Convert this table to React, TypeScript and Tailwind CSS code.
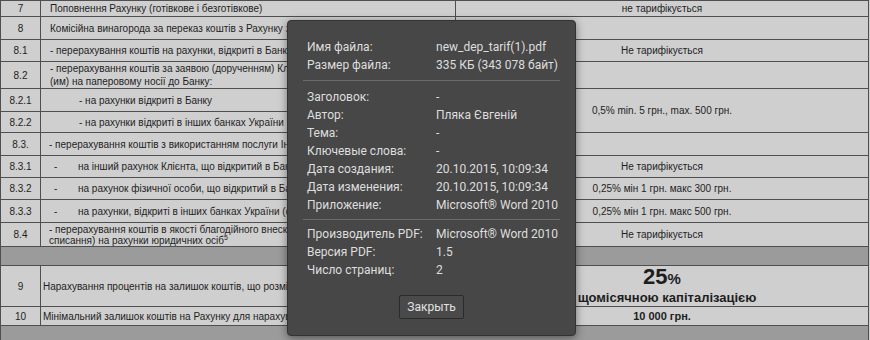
import React from "react";

type Row = {
  num: string;
  h: string;
  band?: boolean;
  desc?: React.ReactNode;
  fee?: React.ReactNode;
  feeSpan?: number;
  noFee?: boolean;
};

const cell = "border border-[#4f4f4f] p-0 align-middle";

// the dialog hides the rest of each description, so clip it right at its edge
function Clip({ children, pl }: { children: React.ReactNode; pl: string }) {
  return <div className={`w-[247px] overflow-hidden whitespace-nowrap ${pl}`}>{children}</div>;
}

function Dash({ text }: { text: string }) {
  return (
    <Clip pl="pl-[13px]">
      <span className="inline-block w-[24px]">-</span>
      {text}
    </Clip>
  );
}

const ROWS: Row[] = [
  { num: "7", h: "h-[14px]", desc: <div className="pl-[9px] whitespace-nowrap">Поповнення Рахунку (готівкове і безготівкове)</div>, fee: "не тарифікується" },
  { num: "8", h: "h-[23px]", desc: <Clip pl="pl-[9px]">Комісійна винагорода за переказ коштів з Рахунку з Рахунку</Clip> },
  { num: "8.1", h: "h-[22px]", desc: <Clip pl="pl-[9px]">- перерахування коштів на рахунки, відкриті в Банку</Clip>, fee: "Не тарифікується" },
  {
    num: "8.2",
    h: "h-[24px]",
    desc: (
      <Clip pl="pl-[9px] leading-[13px]">
        <div>- перерахування коштів за заявою (дорученням) Клієнта</div>
        <div>(им) на паперовому носії до Банку:</div>
      </Clip>
    ),
  },
  { num: "8.2.1", h: "h-[23px]", desc: <Clip pl="pl-[38px]">- на рахунки відкриті в Банку</Clip>, fee: "0,5% min. 5 грн., max. 500 грн.", feeSpan: 2 },
  { num: "8.2.2", h: "h-[21px]", desc: <Clip pl="pl-[38px]">- на рахунки відкриті в інших банках України</Clip>, noFee: true },
  { num: "8.3.", h: "h-[23px]", desc: <Clip pl="pl-[8px]">- перерахування коштів з використанням послуги Інтернет</Clip> },
  { num: "8.3.1", h: "h-[22px]", desc: <Dash text="на інший рахунок Клієнта, що відкритий в Банку" />, fee: "Не тарифікується" },
  { num: "8.3.2", h: "h-[22px]", desc: <Dash text="на рахунок фізичної особи, що відкритий в Банку" />, fee: "0,25% мін 1 грн. макс 300 грн." },
  { num: "8.3.3", h: "h-[23px]", desc: <Dash text="на рахунки, відкриті в інших банках України (фізичних" />, fee: "0,25% мін 1 грн. макс 500 грн." },
  {
    num: "8.4",
    h: "h-[24px]",
    desc: (
      <Clip pl="pl-[8px] leading-[11px]">
        <div>- перерахування коштів в якості благодійного внеску</div>
        <div>
          списання) на рахунки юридичних осіб<sup className="text-[7px]">5</sup>
        </div>
      </Clip>
    ),
    fee: "Не тарифікується",
  },
  { num: "", h: "h-[19px]", band: true },
  {
    num: "9",
    h: "h-[39px]",
    desc: <Clip pl="pl-[2px]">Нарахування процентів на залишок коштів, що розміщені</Clip>,
    fee: (
      <div className="font-bold leading-none">
        <div className="text-[22px] leading-[22px]">
          25<span className="text-[15px]">%</span>
        </div>
        <div className="text-[13px] leading-[16px] whitespace-nowrap">з щомісячною капіталізацією</div>
      </div>
    ),
  },
  { num: "10", h: "h-[19px]", desc: <Clip pl="pl-[2px]">Мінімальний залишок коштів на Рахунку для нарахування</Clip>, fee: <span className="font-bold text-[11px]">10 000 грн.</span> },
  { num: "", h: "h-[19px]", band: true },
  { num: "", h: "h-[10px]" },
];

const INFO_TOP = [
  ["Имя файла:", "new_dep_tarif(1).pdf"],
  ["Размер файла:", "335 КБ (343 078 байт)"],
];

const INFO_MID = [
  ["Заголовок:", "-"],
  ["Автор:", "Пляка Євгеній"],
  ["Тема:", "-"],
  ["Ключевые слова:", "-"],
  ["Дата создания:", "20.10.2015, 10:09:34"],
  ["Дата изменения:", "20.10.2015, 10:09:34"],
  ["Приложение:", "Microsoft® Word 2010"],
];

const INFO_BOTTOM = [
  ["Производитель PDF:", "Microsoft® Word 2010"],
  ["Версия PDF:", "1.5"],
  ["Число страниц:", "2"],
];

function InfoBlock({ rows }: { rows: string[][] }) {
  return (
    <div className="grid grid-cols-[129px_1fr] pl-[19px] leading-[18px]">
      {rows.map(([k, v]) => (
        <React.Fragment key={k}>
          <div className="whitespace-nowrap">{k}</div>
          <div className="whitespace-nowrap">{v}</div>
        </React.Fragment>
      ))}
    </div>
  );
}

export default function App() {
  return (
    <div className="relative w-[870px] h-[340px] overflow-hidden bg-[#cfcfcf]">
      <table
        className="table-fixed border-collapse w-[868px] text-[10px] text-[#1e1e1e]"
        style={{ fontFamily: '"Liberation Sans", Arial, sans-serif' }}
      >
        <colgroup>
          <col className="w-[40px]" />
          <col className="w-[415px]" />
          <col className="w-[413px]" />
        </colgroup>
        <tbody>
          {ROWS.map((r, i) =>
            r.band ? (
              <tr key={i} className={r.h}>
                <td colSpan={3} className={`${cell} bg-[#9b9b9b]`} />
              </tr>
            ) : (
              <tr key={i} className={r.h}>
                <td className={`${cell} text-center`}>{r.num}</td>
                <td className={cell}>{r.desc}</td>
                {r.noFee ? null : (
                  <td rowSpan={r.feeSpan ?? 1} className={`${cell} text-center`}>
                    {r.fee}
                  </td>
                )}
              </tr>
            )
          )}
        </tbody>
      </table>

      {/* document properties dialog */}
      <div
        className="absolute left-[287px] top-[20px] w-[289px] h-[316px] rounded-[4px] border border-[#333333] bg-[#474747] text-[12px] text-[#dedede] shadow-[0_2px_8px_rgba(0,0,0,0.45)]"
        style={{ fontFamily: 'Roboto, "Noto Sans", sans-serif' }}
      >
        <div className="pt-[17px]">
          <InfoBlock rows={INFO_TOP} />
          <div className="mx-[15px] mt-[6px] h-px bg-[#6b6b6b]" />
          <div className="mt-[7px]">
            <InfoBlock rows={INFO_MID} />
          </div>
          <div className="mx-[15px] mt-[5px] h-px bg-[#6b6b6b]" />
          <div className="mt-[5px]">
            <InfoBlock rows={INFO_BOTTOM} />
          </div>
          <div className="mt-[16px] flex justify-center">
            <button className="h-[24px] w-[65px] rounded-[2px] border border-[#2b2b2b] bg-[#4a4a4a] text-[12px] text-[#e2e2e2]">
              Закрыть
            </button>
          </div>
        </div>
      </div>
    </div>
  );
}
